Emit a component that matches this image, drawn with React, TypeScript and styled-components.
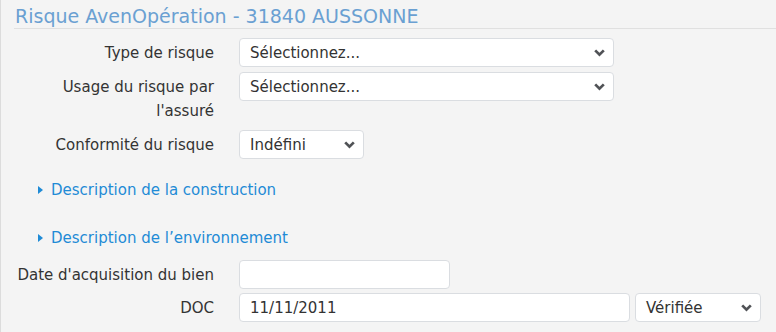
import React from "react";
import styled, { createGlobalStyle } from "styled-components";

const Global = createGlobalStyle`
  html, body { margin: 0; padding: 0; background: #f4f4f4; }
  body { font-family: "DejaVu Sans", Verdana, sans-serif; font-size: 15px; color: #333; }
`;

const Panel = styled.div`
  border-left: 1px solid #dcdcdc;
  min-height: 332px;
  box-sizing: border-box;
  padding-left: 13px;
  background: #f4f4f4;
`;

const Title = styled.h1`
  margin: 0;
  font-weight: normal;
  font-size: 19px;
  line-height: 22px;
  color: #6aa0d2;
  padding: 5px 0 1px 1px;
  border-bottom: 1px solid #e0e0e0;
`;

const Form = styled.div`
  padding-top: 9px;
  display: flex;
  flex-direction: column;
`;

const Row = styled.div<{ $gap?: number }>`
  display: grid;
  grid-template-columns: 200px 1fr;
  column-gap: 25px;
  margin-bottom: ${(p) => p.$gap ?? 5}px;
`;

const Label = styled.label`
  text-align: right;
  line-height: 24px;
  padding-top: 3px;
`;

const Controls = styled.div`
  display: flex;
  gap: 5px;
  align-items: flex-start;
`;

const Field = styled.div<{ $w: number }>`
  width: ${(p) => p.$w}px;
  height: 29px;
  box-sizing: border-box;
  background: #fff;
  border: 1px solid #dadde1;
  border-radius: 4px;
  display: flex;
  align-items: center;
  padding: 0 8px 0 10px;
  color: #333;
`;

const FieldText = styled.span`
  flex: 1;
`;

const Chevron = () => (
  <svg width="11" height="8" viewBox="0 0 11 8">
    <path d="M1.2 1.4 L5.5 5.7 L9.8 1.4" fill="none" stroke="#505256" strokeWidth="2.7" />
  </svg>
);

const Select = ({ w, value }: { w: number; value: string }) => (
  <Field $w={w}>
    <FieldText>{value}</FieldText>
    <Chevron />
  </Field>
);

const Toggle = styled.div<{ $mt: number; $mb: number }>`
  display: flex;
  align-items: center;
  gap: 8px;
  margin: ${(p) => p.$mt}px 0 ${(p) => p.$mb}px 24px;
  color: #1f8bd6;
  line-height: 24px;
  cursor: pointer;
`;

const Caret = styled.span`
  width: 0;
  height: 0;
  border-top: 4.5px solid transparent;
  border-bottom: 4.5px solid transparent;
  border-left: 5px solid #1f8bd6;
`;

export default function App() {
  return (
    <>
      <Global />
      <Panel>
        <Title>Risque AvenOpération - 31840 AUSSONNE</Title>
        <Form>
          <Row>
            <Label>Type de risque</Label>
            <Controls>
              <Select w={375} value="Sélectionnez..." />
            </Controls>
          </Row>
          <Row $gap={7}>
            <Label>
              Usage du risque par
              <br />
              l'assuré
            </Label>
            <Controls>
              <Select w={375} value="Sélectionnez..." />
            </Controls>
          </Row>
          <Row $gap={0}>
            <Label>Conformité du risque</Label>
            <Controls>
              <Select w={125} value="Indéfini" />
            </Controls>
          </Row>
          <Toggle $mt={19} $mb={24}>
            <Caret />
            Description de la construction
          </Toggle>
          <Toggle $mt={0} $mb={10}>
            <Caret />
            Description de l’environnement
          </Toggle>
          <Row $gap={4}>
            <Label>Date d'acquisition du bien</Label>
            <Controls>
              <Field $w={211} />
            </Controls>
          </Row>
          <Row>
            <Label>DOC</Label>
            <Controls>
              <Field $w={391}>11/11/2011</Field>
              <Select w={126} value="Vérifiée" />
            </Controls>
          </Row>
        </Form>
      </Panel>
    </>
  );
}
